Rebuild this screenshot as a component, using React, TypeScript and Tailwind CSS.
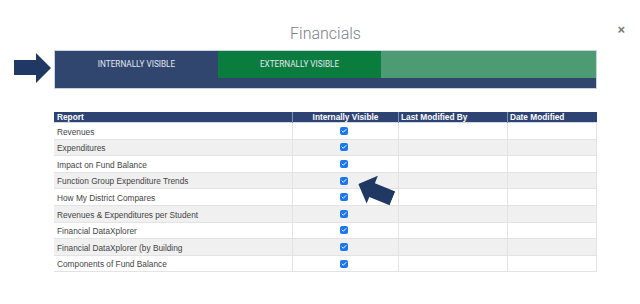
import { Check } from 'lucide-react'

const reports = [
  'Revenues',
  'Expenditures',
  'Impact on Fund Balance',
  'Function Group Expenditure Trends',
  'How My District Compares',
  'Revenues & Expenditures per Student',
  'Financial DataXplorer',
  'Financial DataXplorer (by Building',
  'Components of Fund Balance',
]

function BigArrow({ className }: { className?: string }) {
  return (
    <svg width="37" height="30" viewBox="0 0 37 30" className={className}>
      <polygon points="0,7 22,7 22,0 37,15 22,30 22,22 0,22" fill="#1f3864" />
    </svg>
  )
}

export default function App() {
  return (
    <div className="relative w-[640px] h-[304px] bg-white overflow-hidden font-['Liberation_Sans',Arial,sans-serif]">
      <button className="absolute top-[23px] right-[15px] text-[13px] leading-none font-bold text-[#777]">×</button>

      <h1 className="pt-[25px] h-[50px] text-center pl-[11px] text-[16px] leading-[18px] font-light text-[#7b8089] font-['Roboto',sans-serif]">
        Financials
      </h1>

      {/* tabs */}
      <div className="flex items-center pl-[14px]">
        <BigArrow className="mt-[-3px]" />
        <div className="ml-[3px] w-[543px] border border-[#c9d2e3] bg-[#30466f]">
          <div className="flex h-[27px] text-[8.2px] text-[#e3e7ef] font-['Roboto',sans-serif]">
            <div className="w-[163px] flex items-center justify-center bg-[#30466f]">INTERNALLY VISIBLE</div>
            <div className="w-[163px] flex items-center justify-center bg-[#0a7c3e]">EXTERNALLY VISIBLE</div>
            <div className="flex-1 bg-[#4d9b72]" />
          </div>
          <div className="h-[10px]" />
        </div>
      </div>

      {/* table */}
      <div className="ml-[54px] mt-[23px] w-[543px] h-[160px] overflow-hidden text-[8.3px] text-[#444]">
        <div className="grid grid-cols-[238px_106px_109px_90px] h-[11px] bg-[#2d4373] text-white font-bold leading-[11px] border-b border-[#cfd6e4]">
          <div className="pl-[3px]">Report</div>
          <div className="text-center border-l border-[#8090b0]">Internally Visible</div>
          <div className="pl-[2px] border-l border-[#8090b0]">Last Modified By</div>
          <div className="pl-[2px] border-l border-[#8090b0]">Date Modified</div>
        </div>
        {reports.map((r, i) => (
          <div
            key={r}
            className={`grid grid-cols-[238px_106px_109px_90px] h-[16.6px] border-b border-[#e3e3e3] ${i % 2 === 1 ? 'bg-[#f0f0f0]' : 'bg-white'}`}
          >
            <div className="pl-[3px] pt-[2px] flex items-center">{r}</div>
            <div className="flex items-center justify-center border-l border-[#e3e3e3] pr-[3px]">
              <span className="w-[8px] h-[8px] rounded-[2px] bg-[#1877f2] flex items-center justify-center">
                <Check size={6} strokeWidth={4} color="white" />
              </span>
            </div>
            <div className="border-l border-[#e3e3e3]" />
            <div className="border-l border-r border-[#e3e3e3]" />
          </div>
        ))}
      </div>

      {/* pointer arrow over the table */}
      <BigArrow className="absolute left-[357px] top-[176px] rotate-[202deg]" />
    </div>
  )
}
